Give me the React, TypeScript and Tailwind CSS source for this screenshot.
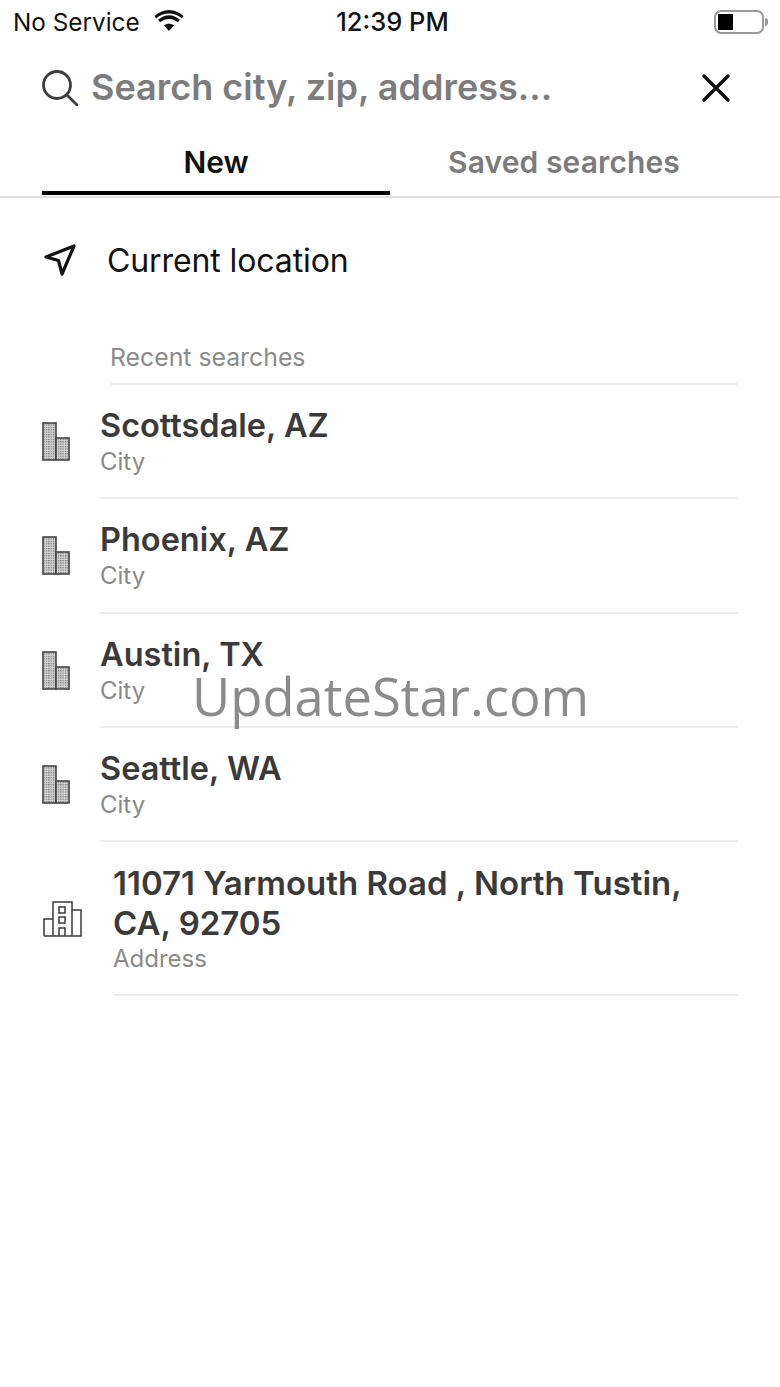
import React from 'react';

const CityIcon = () => (
  <svg width="30" height="40" viewBox="0 0 30 40" className="shrink-0" fill="none">
    <defs>
      <pattern id="windows" width="2.4" height="2.4" patternUnits="userSpaceOnUse">
        <rect width="2.4" height="2.4" fill="#d4d4d4" />
        <rect width="1.2" height="1.2" fill="#6b6b6b" />
      </pattern>
    </defs>
    <rect x="2" y="1" width="13" height="37" fill="url(#windows)" stroke="#444" strokeWidth="1.6" />
    <rect x="15" y="16" width="13" height="22" fill="url(#windows)" stroke="#444" strokeWidth="1.6" />
  </svg>
);

const AddressIcon = () => (
  <svg width="40" height="36" viewBox="0 0 40 36" className="shrink-0" fill="none" stroke="#3a3a3a" strokeWidth="1.5">
    <path d="M1 35V18h9v17M10 35V1h19v34M29 9h9v26H1" />
    <rect x="16" y="6" width="6" height="6" />
    <rect x="16" y="16" width="6" height="6" />
    <path d="M16 35v-8h6v8" />
  </svg>
);

const cities = ['Scottsdale, AZ', 'Phoenix, AZ', 'Austin, TX', 'Seattle, WA'];

export default function App() {
  return (
    <div className="relative h-[1387px] w-[780px] overflow-hidden bg-white font-['Inter',sans-serif]">
      {/* Status bar */}
      <div className="flex h-11 items-center justify-between pl-[13px] pr-[12px] text-[#111]">
        <div className="flex w-[254px] items-center gap-[14px]">
          <span className="text-[24.300px]">No Service</span>
          <svg width="30" height="22" viewBox="0 0 30 22" fill="#111" className="-mt-1">
            <path d="M15 4.500c-5 0-9 1.800-13 5L.5 7C4.500 3.500 9.500 1 15 1s10.500 2.500 14.500 6L28 9.500c-4-3.200-8-5-13-5z" />
            <path d="M15 10c-3.300 0-6.300 1.200-8.800 3.300L4 10.700C7.300 8 11 6.200 15 6.200s7.700 1.800 11 4.500l-2.200 2.600C21.300 11.200 18.300 10 15 10z" />
            <path d="M15 22l-5-5.600C11.300 15.300 13 14.700 15 14.700s3.700.6 5 1.700z" />
          </svg>
        </div>
        <span className="text-[25.500px] font-medium">12:39 PM</span>
        <div className="flex w-[250px] items-center justify-end gap-px">
          <div className="flex h-6 w-[50px] items-center rounded-[7px] border-2 border-[#9a9a9a] px-[2px]">
            <div className="h-4 w-[15px] bg-black" />
          </div>
          <div className="h-2 w-[3px] rounded-r-sm bg-[#9a9a9a]" />
        </div>
      </div>

      {/* Search */}
      <div className="flex h-[88px] items-center pl-[42px] pr-[49px]">
        <svg width="36" height="36" viewBox="0 0 36 36" fill="none" stroke="#3d3d3d" strokeWidth="2.800" strokeLinecap="round" className="-mt-[1px] shrink-0">
          <circle cx="15" cy="15" r="13.500" />
          <path d="M25 25l10 10" />
        </svg>
        <span className="-mt-[2px] ml-[13px] flex-1 text-[36px] font-semibold text-[#7c7c7c]">Search city, zip, address...</span>
        <svg width="30" height="30" viewBox="0 0 30 30" fill="none" stroke="#111" strokeWidth="3.400" strokeLinecap="round" className="shrink-0">
          <path d="M3 3l24 24M27 3L3 27" />
        </svg>
      </div>

      {/* Tabs */}
      <div className="border-b-2 border-[#dedede] pl-[42px] pr-[42px]">
        <div className="flex h-[64px]">
          <div className="mb-px flex w-[348px] items-start justify-center border-b-4 border-black pt-[12px] text-[30px] font-semibold leading-9 text-[#111]">New</div>
          <div className="flex flex-1 items-start justify-center pt-[12px] text-[30px] font-semibold leading-9 tracking-[0.1px] text-[#7c7c7c]">Saved searches</div>
        </div>
      </div>

      {/* Current location */}
      <div className="flex h-[126px] items-start pl-[44px] pt-[46px]">
        <svg width="32" height="32" viewBox="0 0 32 32" fill="none" stroke="#111" strokeWidth="3.200" strokeLinejoin="round" className="shrink-0">
          <path d="M2 13L30 2 18 30l-3.500-13.500z" />
        </svg>
        <span className="-mt-[1px] ml-[31px] text-[32px] leading-9 tracking-[-0.1px] text-[#111]">Current location</span>
      </div>

      {/* Recent searches */}
      <div className="ml-[110px] mr-[42px] h-[61px] border-b-2 border-[#ececec] pt-[19px] text-[24.800px] leading-7 text-[#8a8a8a]">Recent searches</div>

      {cities.map((city) => (
        <div key={city} className="flex h-[114.300px] items-center pl-[41px]">
          <div className="w-[59px]">
            <CityIcon />
          </div>
          <div className="mr-[42px] flex h-full flex-1 flex-col border-b-2 border-[#ececec] pt-[21px]">
            <span className="text-[32.500px] font-semibold leading-10 text-[#3a3a3a]">{city}</span>
            <span className="text-[24px] leading-8 text-[#8a8a8a]">City</span>
          </div>
        </div>
      ))}

      <div className="flex h-[154px] items-center pl-[43px]">
        <div className="w-[70px]">
          <AddressIcon />
        </div>
        <div className="mr-[42px] flex h-full flex-1 flex-col border-b-2 border-[#ececec] pt-[21px]">
          <span className="text-[33px] font-semibold leading-10 text-[#3a3a3a]">11071 Yarmouth Road , North Tustin, CA, 92705</span>
          <span className="text-[24px] leading-8 text-[#8a8a8a]">Address</span>
        </div>
      </div>

      {/* Watermark */}
      <div className="absolute left-[192px] top-[662px] font-['Open_Sans',sans-serif] text-[52.500px] leading-[68px] text-[#6e6e6e]/80">UpdateStar.com</div>
    </div>
  );
}
